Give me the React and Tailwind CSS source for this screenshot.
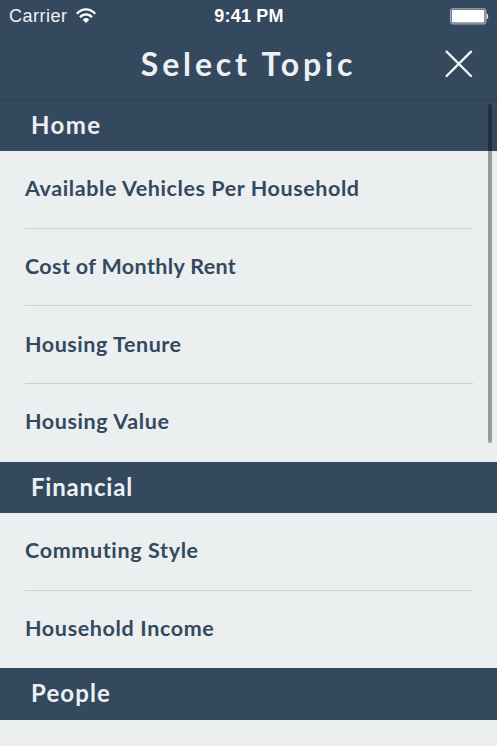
const sections = [
  {
    title: 'Home',
    band: 'h-[51px] pb-[2px]',
    track: 'tracking-[1.4px]',
    rows: [
      { label: 'Available Vehicles Per Household', height: 'h-[78px] pb-[2px]', track: 'tracking-[0.58px]' },
      { label: 'Cost of Monthly Rent', height: 'h-[77px] pb-[2px]', track: 'tracking-[0.36px]' },
      { label: 'Housing Tenure', height: 'h-[78px] pb-px', track: 'tracking-[0.55px]' },
      { label: 'Housing Value', height: 'h-[78px] pb-[4px]', track: 'tracking-[0.6px]' },
    ],
  },
  {
    title: 'Financial',
    band: 'h-[51px] pb-[2px]',
    track: 'tracking-[0.8px]',
    rows: [
      { label: 'Commuting Style', height: 'h-[78px] pb-[2px]', track: 'tracking-[0.64px]' },
      { label: 'Household Income', height: 'h-[77px] pb-[2px]', track: 'tracking-[0.64px]' },
    ],
  },
  { title: 'People', band: 'h-[52px] pb-[2px]', track: 'tracking-[1.1px]', rows: [] },
];

function StatusBar() {
  return (
    <div className="grid h-8 grid-cols-3 items-center pl-[9px] pr-2 font-['Liberation_Sans',Arial,sans-serif] text-[18px] leading-8 text-white">
      <div className="flex items-center gap-[8px]">
        <span className="tracking-[0.5px] text-[#edf2f6]">Carrier</span>
        <svg width="20" height="16" viewBox="0 0 20 16" fill="none" stroke="#fff" strokeWidth="2.3">
          <path d="M0.8 5.8C6-.2 14-.2 19.2 5.8" />
          <path d="M4 9.2C7.5 5.3 12.5 5.3 16 9.2" />
          <path d="M6.8 11.8C8.6 9.5 11.4 9.5 13.2 11.8L10 15Z" fill="#fff" stroke="none" />
        </svg>
      </div>
      <span className="text-center font-bold tracking-[0.2px] whitespace-nowrap">9:41 PM</span>
      <svg className="justify-self-end" width="39" height="17" viewBox="0 0 39 17">
        <rect x="0.6" y="0.9" width="35.2" height="15" rx="2.5" fill="none" stroke="#a3afbd" strokeWidth="1.2" />
        <rect x="1.8" y="2.1" width="32.6" height="12.4" rx="1.2" fill="#fff" />
        <path d="M36.5 5.5C38.8 6 38.8 10.8 36.5 11.3Z" fill="#e3e8ee" />
      </svg>
    </div>
  );
}

export default function App() {
  return (
    <div className="relative h-[746px] w-[497px] overflow-hidden bg-[#ebeff0] font-['Lato','Open_Sans',sans-serif]">
      <header className="h-[100px] border-b border-[#2d3f54] bg-[#34495e]">
        <StatusBar />
        <div className="grid h-16 grid-cols-[1fr_auto_1fr] items-center">
          <span />
          <h1 className="text-[32px] leading-16 font-bold tracking-[3.85px] text-[#ecf0f5]">Select Topic</h1>
          <button className="mr-6 justify-self-end" aria-label="Close">
            <svg width="28" height="28" viewBox="0 0 28 28" stroke="#f4f7fa" strokeWidth="2.3" strokeLinecap="round">
              <path d="M1.6 1.6L26 26M26 1.6L1.6 26" />
            </svg>
          </button>
        </div>
      </header>
      <main>
        {sections.map((s) => (
          <section key={s.title}>
            <h2 className={`flex items-center bg-[#34495e] pl-[31px] text-[24px] font-bold text-[#ecf0f5] ${s.band}`}>
              <span className={s.track}>{s.title}</span>
            </h2>
            <ul className="pr-6 pl-[25px]">
              {s.rows.map((r) => (
                <li key={r.label} className={`flex items-center border-b border-[#cbd0d5] text-[21.5px] font-bold text-[#34495e] last:border-0 ${r.height}`}>
                  <span className={r.track}>{r.label}</span>
                </li>
              ))}
            </ul>
          </section>
        ))}
      </main>
      <div className="absolute top-[104px] right-[5px] h-[339px] w-1 rounded-full bg-black/35" />
    </div>
  );
}
